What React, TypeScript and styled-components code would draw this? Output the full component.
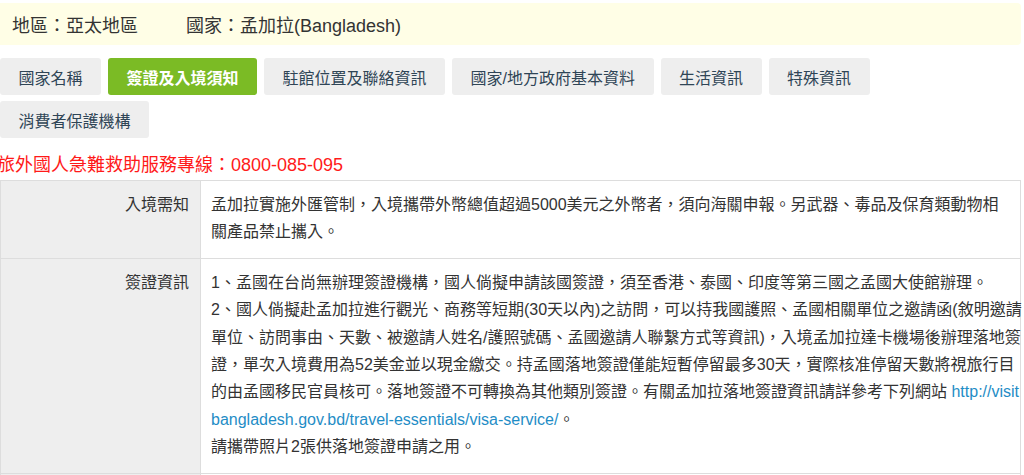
import React from 'react';
import styled, { createGlobalStyle } from 'styled-components';

const GlobalStyle = createGlobalStyle`
  body {
    margin: 0;
    background: #fff;
    font-family: "Liberation Sans", "Noto Sans CJK TC", sans-serif;
    color: #333;
  }
`;

type Tab = { label: string; active?: boolean };

const tabs: Tab[] = [
  { label: '國家名稱' },
  { label: '簽證及入境須知', active: true },
  { label: '駐館位置及聯絡資訊' },
  { label: '國家/地方政府基本資料' },
  { label: '生活資訊' },
  { label: '特殊資訊' },
  { label: '消費者保護機構' },
];

const App = () => {
  return (
    <>
      <GlobalStyle />
      <St.Page>
        <St.Header>
          <St.HeaderItem>地區：亞太地區</St.HeaderItem>
          <St.HeaderItem>國家：孟加拉(Bangladesh)</St.HeaderItem>
        </St.Header>

        <St.Tabs>
          {tabs.map((t) => (
            <St.Tab key={t.label} $active={t.active}>
              {t.label}
            </St.Tab>
          ))}
        </St.Tabs>

        <St.Hotline>旅外國人急難救助服務專線：0800-085-095</St.Hotline>

        <St.Table>
          <tbody>
            <tr>
              <St.Label>入境需知</St.Label>
              <St.Cell>
                孟加拉實施外匯管制，入境攜帶外幣總值超過5000美元之外幣者，須向海關申報。另武器、毒品及保育類動物相
                <br />
                關產品禁止攜入。
              </St.Cell>
            </tr>
            <tr>
              <St.Label>簽證資訊</St.Label>
              <St.Cell>
                1、孟國在台尚無辦理簽證機構，國人倘擬申請該國簽證，須至香港、泰國、印度等第三國之孟國大使館辦理。
                <br />
                2、國人倘擬赴孟加拉進行觀光、商務等短期(30天以內)之訪問，可以持我國護照、孟國相關單位之邀請函(敘明邀請
                <br />
                單位、訪問事由、天數、被邀請人姓名/護照號碼、孟國邀請人聯繫方式等資訊)，入境孟加拉達卡機場後辦理落地簽
                <br />
                證，單次入境費用為52美金並以現金繳交。持孟國落地簽證僅能短暫停留最多30天，實際核准停留天數將視旅行目
                <br />
                的由孟國移民官員核可。落地簽證不可轉換為其他類別簽證。有關孟加拉落地簽證資訊請詳參考下列網站{' '}
                <St.Link href="#">
                  http://visit
                  <br />
                  bangladesh.gov.bd/travel-essentials/visa-service/
                </St.Link>
                。
                <br />
                請攜帶照片2張供落地簽證申請之用。
              </St.Cell>
            </tr>
            <tr>
              <St.Label>&nbsp;</St.Label>
              <St.Cell>&nbsp;</St.Cell>
            </tr>
          </tbody>
        </St.Table>
      </St.Page>
    </>
  );
};

export default App;

const St = {
  Page: styled.div`
    width: 1021px;
    padding-top: 3px;
  `,
  Header: styled.div`
    display: flex;
    align-items: center;
    gap: 48px;
    height: 42px;
    padding-left: 12px;
    background-color: #fffee6;
    border-radius: 0 4px 4px 0;
    font-size: 18px;
    color: #333;
  `,
  HeaderItem: styled.span`
    white-space: nowrap;
  `,
  Tabs: styled.div`
    display: flex;
    flex-wrap: wrap;
    gap: 6px 7px;
    margin-top: 13px;
  `,
  Tab: styled.div<{ $active?: boolean }>`
    display: flex;
    align-items: center;
    height: 37px;
    padding: 0 18.5px;
    border-radius: 3px;
    font-size: 16px;
    font-weight: ${(p) => (p.$active ? 700 : 400)};
    color: ${(p) => (p.$active ? '#fff' : '#2f4556')};
    background-color: ${(p) => (p.$active ? '#7bbb25' : '#eeeeee')};
    cursor: pointer;
  `,
  Hotline: styled.div`
    margin: 12px 0 0 -3px;
    line-height: 30px;
    font-size: 18px;
    color: #ff1a1a;
    white-space: nowrap;
  `,
  Table: styled.table`
    width: 100%;
    border-collapse: collapse;
    border: 1px solid #ddd;
    table-layout: fixed;
  `,
  Label: styled.th`
    width: 188px;
    padding: 10px 11px 12px 0;
    background-color: #eeeeee;
    border: 1px solid #ddd;
    text-align: right;
    vertical-align: top;
    font-size: 16px;
    font-weight: 400;
    line-height: 27.4px;
    color: #333;
  `,
  Cell: styled.td`
    padding: 10px 0 12px 10px;
    border: 1px solid #ddd;
    vertical-align: top;
    font-size: 16px;
    line-height: 27.4px;
    color: #333;
    white-space: nowrap;
  `,
  Link: styled.a`
    color: #1f8dc6;
    text-decoration: none;
  `,
};
